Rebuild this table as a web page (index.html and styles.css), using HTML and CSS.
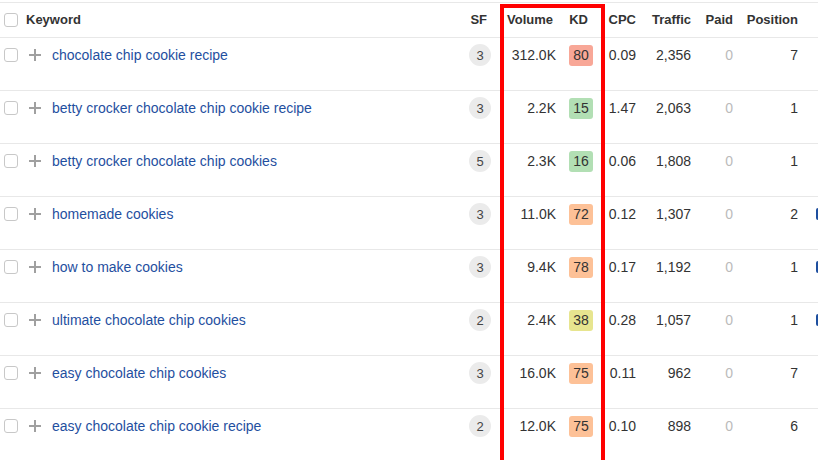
FILE: index.html
```html
<!DOCTYPE html>
<html>
<head>
<meta charset="utf-8">
<link rel="stylesheet" href="styles.css">
</head>
<body>
<div class="page">
  <div class="table">
    <div class="row head">
      <div class="c-chk"><span class="chk"></span></div>
      <div class="c-kw-head">Keyword</div>
      <div class="c-sf"><span class="hpad">SF</span></div>
      <div class="c-num">Volume</div>
      <div class="c-kd"><span class="hkd">KD</span></div>
      <div class="c-num">CPC</div>
      <div class="c-num">Traffic</div>
      <div class="c-num">Paid</div>
      <div class="c-num">Position</div>
      <div class="c-extra"></div>
    </div>

    <div class="row">
      <div class="c-chk"><span class="chk"></span></div>
      <div class="c-plus"><span class="plus"></span></div>
      <div class="c-kw"><a class="kw">chocolate chip cookie recipe</a></div>
      <div class="c-sf"><span class="sf">3</span></div>
      <div class="c-num">312.0K</div>
      <div class="c-kd"><span class="kd red">80</span></div>
      <div class="c-num">0.09</div>
      <div class="c-num">2,356</div>
      <div class="c-num paid">0</div>
      <div class="c-num">7</div>
      <div class="c-extra"></div>
    </div>

    <div class="row">
      <div class="c-chk"><span class="chk"></span></div>
      <div class="c-plus"><span class="plus"></span></div>
      <div class="c-kw"><a class="kw">betty crocker chocolate chip cookie recipe</a></div>
      <div class="c-sf"><span class="sf">3</span></div>
      <div class="c-num">2.2K</div>
      <div class="c-kd"><span class="kd green">15</span></div>
      <div class="c-num">1.47</div>
      <div class="c-num">2,063</div>
      <div class="c-num paid">0</div>
      <div class="c-num">1</div>
      <div class="c-extra"></div>
    </div>

    <div class="row">
      <div class="c-chk"><span class="chk"></span></div>
      <div class="c-plus"><span class="plus"></span></div>
      <div class="c-kw"><a class="kw">betty crocker chocolate chip cookies</a></div>
      <div class="c-sf"><span class="sf">5</span></div>
      <div class="c-num">2.3K</div>
      <div class="c-kd"><span class="kd green">16</span></div>
      <div class="c-num">0.06</div>
      <div class="c-num">1,808</div>
      <div class="c-num paid">0</div>
      <div class="c-num">1</div>
      <div class="c-extra"></div>
    </div>

    <div class="row">
      <div class="c-chk"><span class="chk"></span></div>
      <div class="c-plus"><span class="plus"></span></div>
      <div class="c-kw"><a class="kw">homemade cookies</a></div>
      <div class="c-sf"><span class="sf">3</span></div>
      <div class="c-num">11.0K</div>
      <div class="c-kd"><span class="kd orange">72</span></div>
      <div class="c-num">0.12</div>
      <div class="c-num">1,307</div>
      <div class="c-num paid">0</div>
      <div class="c-num">2</div>
      <div class="c-extra"><span class="bar"></span></div>
    </div>

    <div class="row">
      <div class="c-chk"><span class="chk"></span></div>
      <div class="c-plus"><span class="plus"></span></div>
      <div class="c-kw"><a class="kw">how to make cookies</a></div>
      <div class="c-sf"><span class="sf">3</span></div>
      <div class="c-num">9.4K</div>
      <div class="c-kd"><span class="kd orange">78</span></div>
      <div class="c-num">0.17</div>
      <div class="c-num">1,192</div>
      <div class="c-num paid">0</div>
      <div class="c-num">1</div>
      <div class="c-extra"><span class="bar"></span></div>
    </div>

    <div class="row">
      <div class="c-chk"><span class="chk"></span></div>
      <div class="c-plus"><span class="plus"></span></div>
      <div class="c-kw"><a class="kw">ultimate chocolate chip cookies</a></div>
      <div class="c-sf"><span class="sf">2</span></div>
      <div class="c-num">2.4K</div>
      <div class="c-kd"><span class="kd yellow">38</span></div>
      <div class="c-num">0.28</div>
      <div class="c-num">1,057</div>
      <div class="c-num paid">0</div>
      <div class="c-num">1</div>
      <div class="c-extra"><span class="bar"></span></div>
    </div>

    <div class="row">
      <div class="c-chk"><span class="chk"></span></div>
      <div class="c-plus"><span class="plus"></span></div>
      <div class="c-kw"><a class="kw">easy chocolate chip cookies</a></div>
      <div class="c-sf"><span class="sf">3</span></div>
      <div class="c-num">16.0K</div>
      <div class="c-kd"><span class="kd orange">75</span></div>
      <div class="c-num">0.11</div>
      <div class="c-num">962</div>
      <div class="c-num paid">0</div>
      <div class="c-num">7</div>
      <div class="c-extra"></div>
    </div>

    <div class="row">
      <div class="c-chk"><span class="chk"></span></div>
      <div class="c-plus"><span class="plus"></span></div>
      <div class="c-kw"><a class="kw">easy chocolate chip cookie recipe</a></div>
      <div class="c-sf"><span class="sf">2</span></div>
      <div class="c-num">12.0K</div>
      <div class="c-kd"><span class="kd orange">75</span></div>
      <div class="c-num">0.10</div>
      <div class="c-num">898</div>
      <div class="c-num paid">0</div>
      <div class="c-num">6</div>
      <div class="c-extra"></div>
    </div>
  </div>
  <div class="highlight"></div>
</div>
</body>
</html>
```

FILE: styles.css
```css
html, body {
  margin: 0;
  padding: 0;
  background: #fff;
  overflow: hidden;
}
body {
  width: 818px;
  height: 460px;
  font-family: "Liberation Sans", Arial, sans-serif;
  font-size: 14px;
  color: #333;
}
.page {
  position: relative;
  width: 818px;
  height: 460px;
  overflow: hidden;
}
.table {
  margin-top: 2px;
  border-top: 1px solid #e8e8e8;
  width: 830px;
}
.row {
  display: grid;
  grid-template-columns: 26px 26px 408px 31px 65px 37px 43px 55px 42px 65px 30px;
  height: 53px;
  box-sizing: border-box;
  border-bottom: 1px solid #e8e8e8;
  align-items: start;
  padding-top: 6px;
}
.row > div {
  height: 22px;
  display: flex;
  align-items: center;
  white-space: nowrap;
}
.row.head {
  height: 35px;
  padding-top: 0;
  padding-bottom: 1px;
  align-items: center;
  font-weight: bold;
  font-size: 13px;
}
.row.head > div {
  height: 33px;
}
.c-chk {
  padding-left: 4px;
}
.chk {
  display: block;
  width: 14px;
  height: 14px;
  box-sizing: border-box;
  border: 1px solid #c8c8c8;
  border-radius: 3px;
  background: #fff;
}
.c-kw-head {
  grid-column: 2 / 4;
}
.c-plus {
  padding-left: 3px;
}
.plus {
  position: relative;
  display: block;
  width: 12px;
  height: 12px;
}
.plus::before,
.plus::after {
  content: "";
  position: absolute;
  background: #a0a0a0;
}
.plus::before {
  left: 0;
  top: 5px;
  width: 12px;
  height: 2px;
}
.plus::after {
  left: 5px;
  top: 0;
  width: 2px;
  height: 12px;
}
.kw {
  color: #1f4fa0;
  text-decoration: none;
}
.c-sf {
  justify-content: flex-end;
}
.hpad {
  padding-right: 4px;
}
.sf {
  display: flex;
  align-items: center;
  justify-content: center;
  width: 22px;
  height: 22px;
  border-radius: 50%;
  background: #ebebeb;
  color: #444;
  font-size: 13px;
}
.c-num {
  justify-content: flex-end;
}
.row.head .c-num:nth-child(4) {
  padding-right: 3px;
}
.c-kd {
  justify-content: flex-end;
}
.hkd {
  padding-right: 5px;
}
.kd {
  display: flex;
  align-items: center;
  justify-content: center;
  width: 24px;
  height: 21px;
  border-radius: 3px;
  color: #333;
}
.kd.red { background: #f8a797; }
.kd.green { background: #b2dfb4; }
.kd.orange { background: #fdc197; }
.kd.yellow { background: #e7e58f; }
.paid {
  color: #bbb;
}
.c-extra {
  padding-left: 18px;
}
.bar {
  display: block;
  width: 4px;
  height: 12px;
  border-radius: 2px;
  background: #1e4f9f;
}
.highlight {
  position: absolute;
  left: 500px;
  top: 4px;
  width: 105px;
  height: 480px;
  box-sizing: border-box;
  border: 4px solid #ff0000;
  pointer-events: none;
}
```
